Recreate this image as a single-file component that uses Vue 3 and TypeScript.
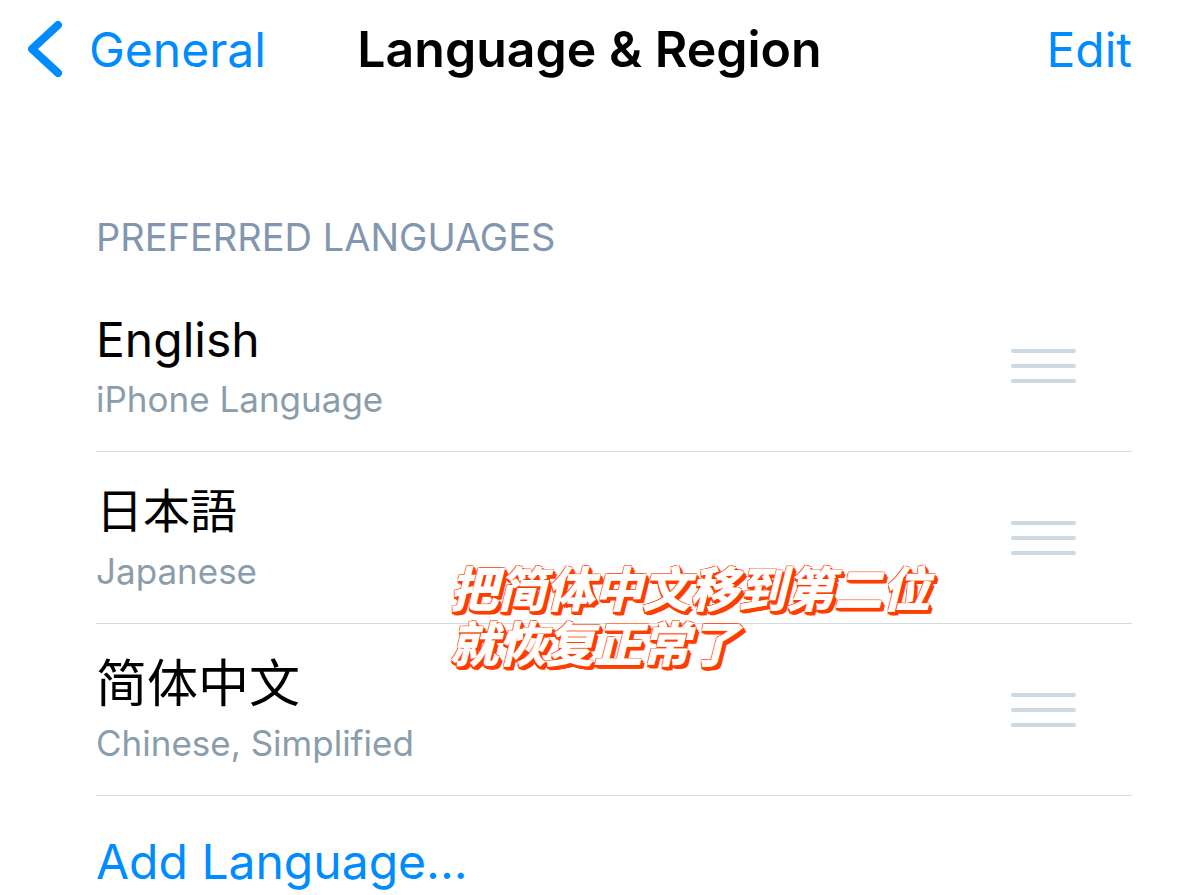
<script setup lang="ts">
interface Language {
  name: string
  lang: string
  detail: string
}

const languages: Language[] = [
  { name: 'English', lang: 'en', detail: 'iPhone Language' },
  { name: '日本語', lang: 'ja', detail: 'Japanese' },
  { name: '简体中文', lang: 'zh', detail: 'Chinese, Simplified' },
]
</script>

<template>
  <div class="page">
    <header class="navbar">
      <a class="back" href="#general">
        <svg class="chevron" viewBox="0 0 36 58" aria-hidden="true">
          <path d="M31 5 L5 29 L31 53" />
        </svg>
        <span>General</span>
      </a>
      <h1 class="title">Language &amp; Region</h1>
      <button class="edit" type="button">Edit</button>
    </header>

    <main class="content">
      <h2 class="section-title">PREFERRED LANGUAGES</h2>
      <ul class="list">
        <li v-for="item in languages" :key="item.lang" class="row">
          <div class="labels">
            <span class="name" :class="item.lang" :lang="item.lang">{{ item.name }}</span>
            <span class="detail">{{ item.detail }}</span>
          </div>
          <button class="handle" type="button" :aria-label="`Reorder ${item.detail}`">
            <span class="bar"></span>
            <span class="bar"></span>
            <span class="bar"></span>
          </button>
        </li>
      </ul>
      <button class="add" type="button">Add Language...</button>
      <p class="caption" lang="zh">把简体中文移到第二位<br />就恢复正常了</p>
    </main>
  </div>
</template>

<style>
body {
  margin: 0;
  background: #fff;
  overflow: hidden;
}
</style>

<style scoped>
.page {
  font-family: Inter, "Noto Sans CJK SC", sans-serif;
  color: #000;
  background: #fff;
}

button {
  border: 0;
  padding: 0;
  background: none;
  font: inherit;
  cursor: pointer;
}

.navbar {
  display: grid;
  grid-template-columns: 1fr auto 1fr;
  align-items: center;
  height: 98px;
  padding: 0 27px;
}

.back {
  display: flex;
  align-items: center;
  gap: 26px;
  color: #008cff;
  font-size: 48px;
  text-decoration: none;
}

.chevron {
  width: 36px;
  height: 58px;
  fill: none;
  stroke: #008cff;
  stroke-width: 8;
  stroke-linecap: round;
  stroke-linejoin: round;
}

.title {
  margin: 0;
  font-size: 50px;
  font-weight: 600;
  white-space: nowrap;
}

.navbar .edit {
  justify-self: end;
  margin-right: 20px;
  color: #008cff;
  font-size: 48px;
}

.content {
  position: relative;
  padding: 114px 47px 0 96px;
}

.section-title {
  margin: 0;
  color: #8396b0;
  font-size: 38px;
  font-weight: 400;
  line-height: 50px;
}

.list {
  margin: 18px 0 0;
  padding: 0;
  list-style: none;
}

.row {
  display: flex;
  align-items: center;
  justify-content: space-between;
  box-sizing: border-box;
  height: 172px;
  padding-right: 56px;
  border-bottom: 1px solid #d3dce1;
}

.labels {
  display: flex;
  flex-direction: column;
  gap: 4px;
}

.name {
  font-size: 48px;
  line-height: 64px;
}

.name.ja,
.name.zh {
  margin-bottom: 8px;
  line-height: 56px;
}

.name.ja {
  font-family: "Noto Sans CJK JP", sans-serif;
  font-size: 47px;
}

.name.zh {
  font-family: "Noto Sans CJK SC", sans-serif;
  font-size: 51px;
}

.detail {
  color: #8a9dab;
  font-size: 35px;
  line-height: 46px;
  padding-bottom: 2px;
}

.handle {
  display: flex;
  flex-direction: column;
  gap: 11px;
  width: 65px;
}

.bar {
  height: 4px;
  border-radius: 2px;
  background: #cfd9e1;
}

.content .add {
  display: block;
  margin-top: 34px;
  color: #008cff;
  font-size: 48px;
  line-height: 64px;
}

.caption {
  position: absolute;
  top: 461px;
  left: 450px;
  margin: 0;
  color: #fff;
  font-family: "Noto Sans CJK SC", sans-serif;
  font-size: 48px;
  font-style: italic;
  font-weight: 700;
  line-height: 55px;
  white-space: nowrap;
  -webkit-text-stroke: 1px #fff;
  text-shadow:
    -1px -1px 0 #ff3d00,
    1px -1px 0 #ff3d00,
    -1px 1px 0 #ff3d00,
    2px 1px 0 #ff3d00,
    3px 2px 0 #ff3d00,
    -1px 3px 0 #ff3d00,
    1px 4px 0 #ff3d00,
    3px 4px 0 #ff3d00,
    4px 4px 0 #ff3d00;
}
</style>
